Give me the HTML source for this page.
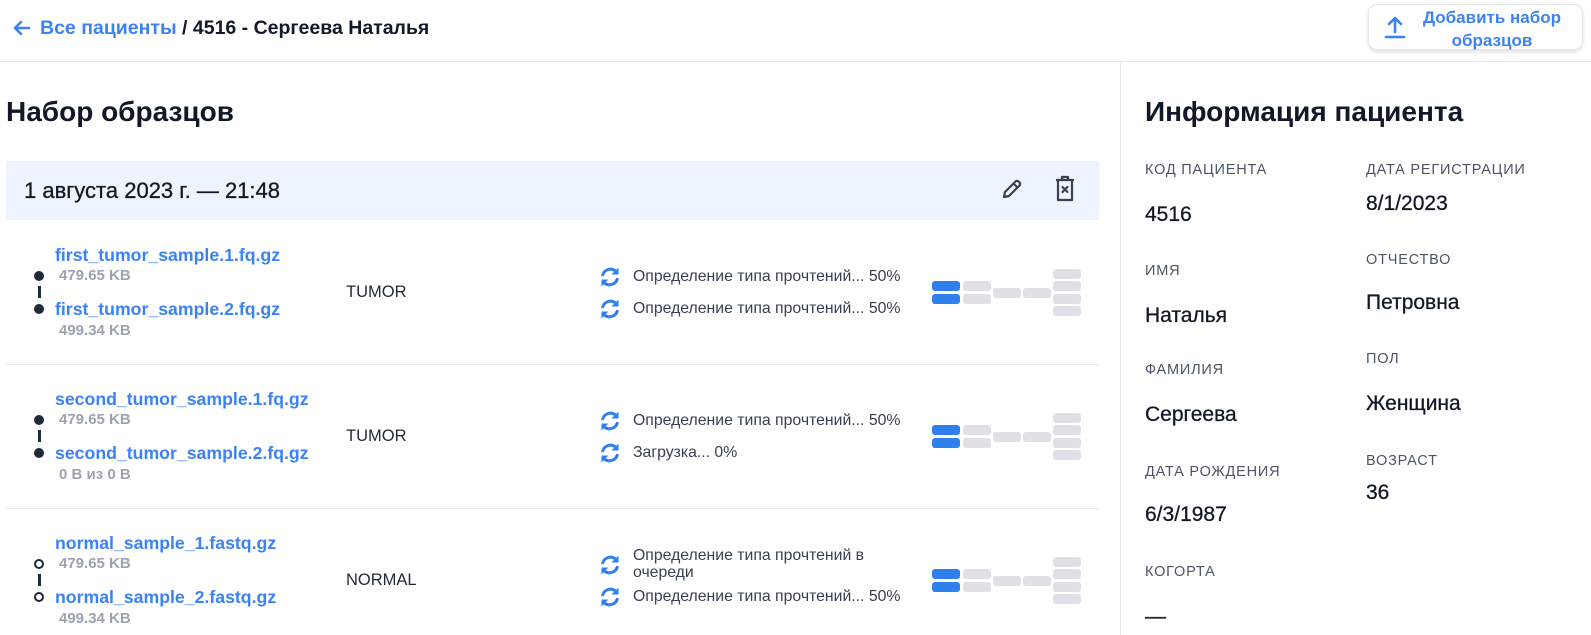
<!DOCTYPE html>
<html><head><meta charset="utf-8"><style>
*{margin:0;padding:0;box-sizing:border-box}
body{width:1591px;height:635px;overflow:hidden;background:#fff;font-family:"Liberation Sans",Arial,sans-serif;color:#111827;position:relative}
.a{position:absolute;white-space:nowrap;line-height:20px}
.fn{font-size:17.7px;font-weight:bold;color:#3b82f6;left:55px}
.sz{font-size:15px;font-weight:bold;color:#9ca3af;left:59px}
.ty{font-size:16.5px;left:346px;color:#1f2937}
.st{font-size:15.8px;left:633px;color:#374151}
.lb{font-size:14.5px;letter-spacing:0.8px;color:#4b5563}
.vl{font-size:21px;color:#111827;-webkit-text-stroke:0.3px #111827}
.b{position:absolute;width:28px;height:10px;border-radius:3px;background:#dfe1e7}
.bl{background:#2f80ed}
.dot{position:absolute;left:34px;width:10px;height:10px;border-radius:50%;background:#1f2937}
.odot{position:absolute;left:34px;width:10px;height:10px;border-radius:50%;border:2.5px solid #1f2937;background:#fff}
.ln{position:absolute;left:38px;width:3px;height:12px;background:#1f2937}
.ic{position:absolute;left:598px;width:24px;height:24px}
</style></head><body>
<div style="position:absolute;left:0;top:61px;width:1591px;height:1px;background:#e5e7eb"></div>
<div style="position:absolute;left:1120px;top:62px;width:1px;height:573px;background:#e5e7eb"></div>
<svg style="position:absolute;left:13px;top:20px" width="18" height="16" viewBox="0 0 18 16"><path d="M16 8H3M8 2L2 8l6 6" fill="none" stroke="#3b82f6" stroke-width="2.5" stroke-linecap="round" stroke-linejoin="round"/></svg>
<div class="a" style="left:40px;top:18px;font-size:19.5px;font-weight:bold"><span style="color:#3b82f6">Все пациенты</span> / 4516 - Сергеева Наталья</div>
<div style="position:absolute;left:1368px;top:4px;width:215px;height:46px;border:1px solid #e5e7eb;border-radius:9px;box-shadow:0 2px 4px rgba(0,0,0,0.12);background:#fff"></div>
<svg style="position:absolute;left:1384px;top:15px" width="22" height="24" viewBox="0 0 22 24"><path d="M11 17V3M5 9l6-6 6 6M2 22h18" fill="none" stroke="#3b82f6" stroke-width="2.6" stroke-linecap="round" stroke-linejoin="round"/></svg>
<div class="a" style="left:1412px;top:6px;width:160px;text-align:center;font-size:17px;font-weight:bold;color:#3b82f6;line-height:23px;white-space:normal">Добавить набор образцов</div>
<div class="a" style="left:6px;top:96px;font-size:28px;line-height:32px;font-weight:bold">Набор образцов</div>
<div style="position:absolute;left:6px;top:161px;width:1093px;height:59px;background:#eef4fd"></div>
<div class="a" style="left:24px;top:179px;font-size:22px;line-height:24px;-webkit-text-stroke:0.3px #111827">1 августа 2023 г. — 21:48</div>
<svg style="position:absolute;left:1000px;top:177px" width="24" height="24" viewBox="0 0 24 24"><path d="M4 20l1-5L15.5 4.5a2 2 0 0 1 3 0l1 1a2 2 0 0 1 0 3L9 19z M13.5 6.5l4 4" fill="none" stroke="#374151" stroke-width="2.2" stroke-linejoin="round"/></svg>
<svg style="position:absolute;left:1053px;top:175px" width="24" height="28" viewBox="0 0 24 28"><path d="M3 5h18M9 5V2h6v3M5 5v20h14V5" fill="none" stroke="#374151" stroke-width="2.2" stroke-linejoin="round"/><path d="M9.5 12l5 5M14.5 12l-5 5" stroke="#374151" stroke-width="2.2" stroke-linecap="round"/></svg>

<div style="position:absolute;left:6px;top:364px;width:1093px;height:1px;background:#e5e7eb"></div>
<div style="position:absolute;left:6px;top:508px;width:1093px;height:1px;background:#e5e7eb"></div>

<svg width="0" height="0" style="position:absolute"><defs><symbol id="sy" viewBox="0 0 24 24"><path d="M4.5 11A8 8 0 0 1 18 6.5" fill="none" stroke="#2f80ed" stroke-width="3"/><path d="M20.5 2.5v7h-7z" fill="#2f80ed"/><path d="M19.5 13A8 8 0 0 1 6 17.5" fill="none" stroke="#2f80ed" stroke-width="3"/><path d="M3.5 21.5v-7h7z" fill="#2f80ed"/></symbol></defs></svg>

<!-- Row 1 -->
<div class="a fn" style="top:245px">first_tumor_sample.1.fq.gz</div>
<div class="a sz" style="top:266px">479.65 KB</div>
<div class="a fn" style="top:299px">first_tumor_sample.2.fq.gz</div>
<div class="a sz" style="top:321px">499.34 KB</div>
<div class="dot" style="top:271px"></div><div class="ln" style="top:286px"></div><div class="dot" style="top:304px"></div>
<div class="a ty" style="top:282px">TUMOR</div>
<svg class="ic" style="top:265px"><use href="#sy"/></svg><div class="a st" style="top:267px">Определение типа прочтений... 50%</div>
<svg class="ic" style="top:297px"><use href="#sy"/></svg><div class="a st" style="top:299px">Определение типа прочтений... 50%</div>
<div class="b bl" style="left:932px;top:281px"></div><div class="b bl" style="left:932px;top:294px"></div>
<div class="b" style="left:963px;top:281px"></div><div class="b" style="left:963px;top:294px"></div>
<div class="b" style="left:993px;top:288px"></div><div class="b" style="left:1023px;top:288px"></div>
<div class="b" style="left:1053px;top:269px"></div><div class="b" style="left:1053px;top:281px"></div><div class="b" style="left:1053px;top:294px"></div><div class="b" style="left:1053px;top:306px"></div>

<!-- Row 2 -->
<div class="a fn" style="top:389px">second_tumor_sample.1.fq.gz</div>
<div class="a sz" style="top:410px">479.65 KB</div>
<div class="a fn" style="top:443px">second_tumor_sample.2.fq.gz</div>
<div class="a sz" style="top:465px">0 B из 0 B</div>
<div class="dot" style="top:415px"></div><div class="ln" style="top:430px"></div><div class="dot" style="top:448px"></div>
<div class="a ty" style="top:426px">TUMOR</div>
<svg class="ic" style="top:409px"><use href="#sy"/></svg><div class="a st" style="top:411px">Определение типа прочтений... 50%</div>
<svg class="ic" style="top:441px"><use href="#sy"/></svg><div class="a st" style="top:443px">Загрузка... 0%</div>
<div class="b bl" style="left:932px;top:425px"></div><div class="b bl" style="left:932px;top:438px"></div>
<div class="b" style="left:963px;top:425px"></div><div class="b" style="left:963px;top:438px"></div>
<div class="b" style="left:993px;top:432px"></div><div class="b" style="left:1023px;top:432px"></div>
<div class="b" style="left:1053px;top:413px"></div><div class="b" style="left:1053px;top:425px"></div><div class="b" style="left:1053px;top:438px"></div><div class="b" style="left:1053px;top:450px"></div>

<!-- Row 3 -->
<div class="a fn" style="top:533px">normal_sample_1.fastq.gz</div>
<div class="a sz" style="top:554px">479.65 KB</div>
<div class="a fn" style="top:587px">normal_sample_2.fastq.gz</div>
<div class="a sz" style="top:609px">499.34 KB</div>
<div class="odot" style="top:559px"></div><div class="ln" style="top:574px"></div><div class="odot" style="top:592px"></div>
<div class="a ty" style="top:570px">NORMAL</div>
<svg class="ic" style="top:553px"><use href="#sy"/></svg><div class="a st" style="top:547px;line-height:17px">Определение типа прочтений в<br>очереди</div>
<svg class="ic" style="top:585px"><use href="#sy"/></svg><div class="a st" style="top:587px">Определение типа прочтений... 50%</div>
<div class="b bl" style="left:932px;top:569px"></div><div class="b bl" style="left:932px;top:582px"></div>
<div class="b" style="left:963px;top:569px"></div><div class="b" style="left:963px;top:582px"></div>
<div class="b" style="left:993px;top:576px"></div><div class="b" style="left:1023px;top:576px"></div>
<div class="b" style="left:1053px;top:557px"></div><div class="b" style="left:1053px;top:569px"></div><div class="b" style="left:1053px;top:582px"></div><div class="b" style="left:1053px;top:594px"></div>

<!-- Right panel -->
<div class="a" style="left:1145px;top:96px;font-size:28px;line-height:32px;font-weight:bold">Информация пациента</div>
<div class="a lb" style="left:1145px;top:160px">КОД ПАЦИЕНТА</div>
<div class="a vl" style="left:1145px;top:205px">4516</div>
<div class="a lb" style="left:1145px;top:261px">ИМЯ</div>
<div class="a vl" style="left:1145px;top:306px">Наталья</div>
<div class="a lb" style="left:1145px;top:360px">ФАМИЛИЯ</div>
<div class="a vl" style="left:1145px;top:405px">Сергеева</div>
<div class="a lb" style="left:1145px;top:462px">ДАТА РОЖДЕНИЯ</div>
<div class="a vl" style="left:1145px;top:505px">6/3/1987</div>
<div class="a lb" style="left:1145px;top:562px">КОГОРТА</div>
<div class="a vl" style="left:1145px;top:607px">—</div>
<div class="a lb" style="left:1366px;top:160px">ДАТА РЕГИСТРАЦИИ</div>
<div class="a vl" style="left:1366px;top:194px">8/1/2023</div>
<div class="a lb" style="left:1366px;top:250px">ОТЧЕСТВО</div>
<div class="a vl" style="left:1366px;top:293px">Петровна</div>
<div class="a lb" style="left:1366px;top:349px">ПОЛ</div>
<div class="a vl" style="left:1366px;top:394px">Женщина</div>
<div class="a lb" style="left:1366px;top:451px">ВОЗРАСТ</div>
<div class="a vl" style="left:1366px;top:483px">36</div>
</body></html>
